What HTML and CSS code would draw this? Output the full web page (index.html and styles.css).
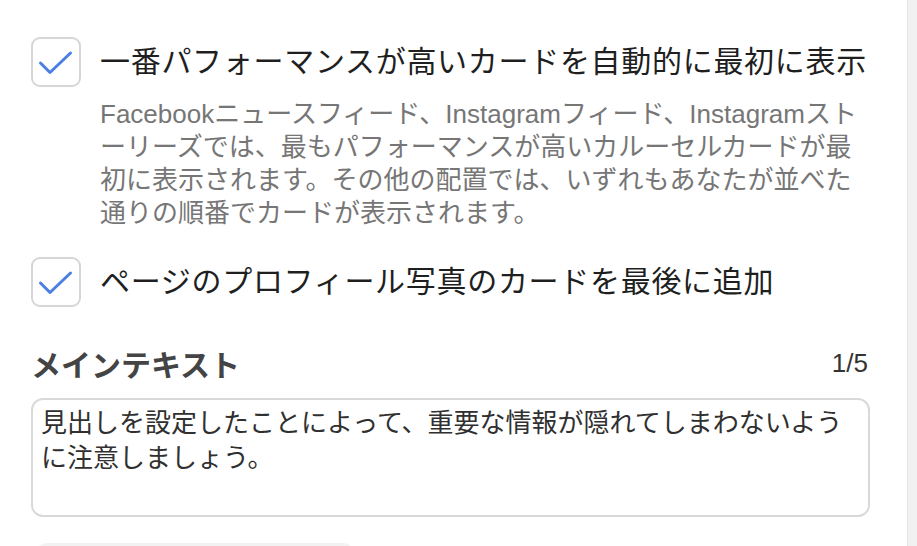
FILE: index.html
```html
<!DOCTYPE html>
<html lang="ja">
<head>
  <meta charset="UTF-8">
  <meta name="viewport" content="width=device-width, initial-scale=1.0">
  <title>カルーセル設定</title>
  <link rel="stylesheet" href="styles.css">
</head>
<body>
  <div id="page">
    <div id="panel">

      <div class="option">
        <span class="checkbox">
          <svg viewBox="0 0 50 50" width="50" height="50">
            <path d="M9.5 26 L19 35.5 L39.5 16" />
          </svg>
        </span>
        <div class="optionText">
          <div class="optionLabel">一番パフォーマンスが高いカードを自動的に最初に表示</div>
          <p class="optionHint">Facebookニュースフィード、Instagramフィード、Instagramストーリーズでは、最もパフォーマンスが高いカルーセルカードが最初に表示されます。その他の配置では、いずれもあなたが並べた通りの順番でカードが表示されます。</p>
        </div>
      </div>

      <div class="option second">
        <span class="checkbox">
          <svg viewBox="0 0 50 50" width="50" height="50">
            <path d="M9.5 26 L19 35.5 L39.5 16" />
          </svg>
        </span>
        <div class="optionText">
          <div class="optionLabel">ページのプロフィール写真のカードを最後に追加</div>
        </div>
      </div>

      <div class="fieldHeader">
        <h2>メインテキスト</h2>
        <span class="counter">1/5</span>
      </div>
      <div class="textBox">見出しを設定したことによって、重要な情報が隠れてしまわないように注意しましょう。</div>

      <button class="addButton"></button>
    </div>
    <div id="scrollTrack"></div>
  </div>
</body>
</html>
```

FILE: styles.css
```css
html, body {
  margin: 0;
  height: 100%;
  overflow: hidden;
  background-color: #fff;
}

body {
  font-family: "Liberation Sans", "Noto Sans CJK JP", sans-serif;
  color: #1c1e21;
}

#page {
  display: flex;
  height: 100%;
}

#panel {
  flex: 1;
  padding: 37px 37px 0 31px;
}

#scrollTrack {
  width: 10px;
  background-color: #f1f1f1;
  border-left: 1px solid #e4e4e4;
}

.option {
  display: flex;
  align-items: flex-start;
  gap: 19px;
}

.option.second {
  margin-top: 27px;
}

.checkbox {
  flex: none;
  width: 50px;
  height: 50px;
  box-sizing: border-box;
  border: 2px solid #d6d6d6;
  border-radius: 9px;
  position: relative;
}

.checkbox svg {
  position: absolute;
  left: -2px;
  top: -2px;
}

.checkbox path {
  fill: none;
  stroke: #4a7fe3;
  stroke-width: 3;
  stroke-linecap: round;
  stroke-linejoin: round;
}

.optionLabel {
  font-size: 30px;
  letter-spacing: 0.7px;
  line-height: 50px;
  color: #1f1f1f;
}

.optionHint {
  margin: 11px 0 0 0;
  width: 770px;
  font-size: 26px;
  line-height: 33px;
  color: #767676;
}

.fieldHeader {
  display: flex;
  justify-content: space-between;
  align-items: center;
  margin-top: 38px;
  height: 36px;
}

.fieldHeader h2 {
  margin: 0;
  font-size: 30px;
  font-weight: bold;
  color: #444;
}

.counter {
  font-size: 26px;
  color: #333;
  margin-right: 2px;
}

.textBox {
  margin-top: 17px;
  height: 119px;
  box-sizing: border-box;
  border: 2px solid #d9d9d9;
  border-radius: 12px;
  padding: 6px 8px 0 8px;
  font-size: 26px;
  line-height: 35px;
  color: #303030;
}

.addButton {
  display: block;
  margin: 26px 0 0 4px;
  width: 320px;
  height: 44px;
  border: none;
  border-radius: 12px;
  background-color: #f2f2f2;
}
```
